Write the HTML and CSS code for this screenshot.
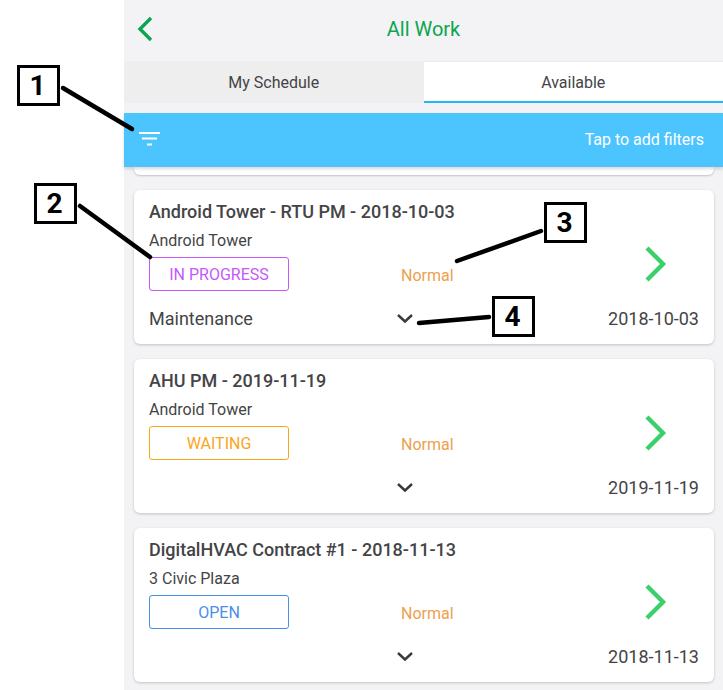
FILE: index.html
```html
<!DOCTYPE html>
<html lang="en">

<head>
    <meta charset="UTF-8">
    <title>All Work</title>
    <link rel="stylesheet" href="styles.css">
</head>

<body>
    <div class="page">
        <div class="side"></div>

        <div class="app">
            <div class="header">
                <svg class="back" width="18" height="26" viewBox="0 0 18 26">
                    <path d="M15 2 L4 13 L15 24" fill="none" stroke="#0ba550" stroke-width="3.4" />
                </svg>
                <span class="header_title">All Work</span>
            </div>

            <div class="tabs">
                <div class="tab">My Schedule</div>
                <div class="tab on">Available</div>
            </div>

            <div class="filter">
                <svg width="21" height="14" viewBox="0 0 21 14">
                    <path d="M0 1 H21 M3 6.5 H18 M8 12.5 H13" fill="none" stroke="#fff" stroke-width="2" />
                </svg>
                <span>Tap to add filters</span>
            </div>

            <div class="list">
                <div class="card_end"></div>

                <div class="card">
                    <div class="card_main">
                        <div class="card_title">Android Tower - RTU PM - 2018-10-03</div>
                        <div class="card_site">Android Tower</div>
                        <div class="card_status">
                            <span class="badge progress">IN PROGRESS</span>
                            <span class="priority">Normal</span>
                        </div>
                    </div>
                    <svg class="go" width="24" height="36" viewBox="0 0 24 36">
                        <path d="M4 2 L20 18 L4 34" fill="none" stroke="#3ad06b" stroke-width="4.4" />
                    </svg>
                    <div class="card_bottom">
                        <span class="card_type">Maintenance</span>
                        <svg class="more" width="18" height="11" viewBox="0 0 18 11">
                            <path d="M2 2 L9 8.5 L16 2" fill="none" stroke="#3a3a3c" stroke-width="2.4" />
                        </svg>
                        <span class="card_date">2018-10-03</span>
                    </div>
                </div>

                <div class="card">
                    <div class="card_main">
                        <div class="card_title">AHU PM - 2019-11-19</div>
                        <div class="card_site">Android Tower</div>
                        <div class="card_status">
                            <span class="badge waiting">WAITING</span>
                            <span class="priority">Normal</span>
                        </div>
                    </div>
                    <svg class="go" width="24" height="36" viewBox="0 0 24 36">
                        <path d="M4 2 L20 18 L4 34" fill="none" stroke="#3ad06b" stroke-width="4.4" />
                    </svg>
                    <div class="card_bottom">
                        <span class="card_type"></span>
                        <svg class="more" width="18" height="11" viewBox="0 0 18 11">
                            <path d="M2 2 L9 8.5 L16 2" fill="none" stroke="#3a3a3c" stroke-width="2.4" />
                        </svg>
                        <span class="card_date">2019-11-19</span>
                    </div>
                </div>

                <div class="card">
                    <div class="card_main">
                        <div class="card_title">DigitalHVAC Contract #1 - 2018-11-13</div>
                        <div class="card_site">3 Civic Plaza</div>
                        <div class="card_status">
                            <span class="badge open">OPEN</span>
                            <span class="priority">Normal</span>
                        </div>
                    </div>
                    <svg class="go" width="24" height="36" viewBox="0 0 24 36">
                        <path d="M4 2 L20 18 L4 34" fill="none" stroke="#3ad06b" stroke-width="4.4" />
                    </svg>
                    <div class="card_bottom">
                        <span class="card_type"></span>
                        <svg class="more" width="18" height="11" viewBox="0 0 18 11">
                            <path d="M2 2 L9 8.5 L16 2" fill="none" stroke="#3a3a3c" stroke-width="2.4" />
                        </svg>
                        <span class="card_date">2018-11-13</span>
                    </div>
                </div>
            </div>
        </div>

        <!-- callouts on top of the screenshot -->
        <svg class="lines" width="723" height="690" viewBox="0 0 723 690">
            <path d="M63 88 L132 129" />
            <path d="M80 206 L150 257" />
            <path d="M457 261 L541 231" />
            <path d="M419 323 L489 317" />
        </svg>
        <div class="num num1">1</div>
        <div class="num num2">2</div>
        <div class="num num3">3</div>
        <div class="num num4">4</div>
    </div>
</body>

</html>
```

FILE: styles.css
```css
* {
    margin: 0;
    padding: 0;
    box-sizing: border-box;
}

body {
    font-family: Roboto, "Liberation Sans", sans-serif;
    color: #444446;
    background-color: #fff;
}

.page {
    position: relative;
    display: flex;
    width: 723px;
    height: 690px;
    overflow: hidden;
}

.side {
    width: 124px;
    flex-shrink: 0;
}

.app {
    flex: 1;
    background-color: #f3f3f5;
}

.header {
    position: relative;
    display: flex;
    align-items: center;
    justify-content: center;
    height: 58px;
    margin-bottom: 3px;
}

.back {
    position: absolute;
    left: 12px;
    top: 16px;
}

.header_title {
    font-size: 20px;
    color: #0ba550;
}

.tabs {
    display: flex;
    height: 42px;
    background-color: #eee;
}

.tab {
    flex: 1;
    display: flex;
    align-items: center;
    justify-content: center;
    font-size: 16px;
}

.tab.on {
    margin-top: 1px;
    padding-top: 1px;
    background-color: #fff;
    border-bottom: 2px solid #1cb5ff;
}

.filter {
    display: flex;
    align-items: center;
    justify-content: space-between;
    height: 54px;
    margin-top: 10px;
    padding: 0 19px 0 15px;
    background-color: #4cc5ff;
    color: #fff;
    font-size: 16px;
    line-height: 18px;
    box-shadow: 0 2px 3px rgba(0, 0, 0, 0.15);
    position: relative;
}

.filter svg {
    margin-bottom: 2px;
}

.list {
    display: flex;
    flex-direction: column;
    gap: 15px;
    padding: 0 9px 0 10px;
}

.card_end {
    height: 8px;
    margin-bottom: 0;
    background-color: #fff;
    border-radius: 0 0 6px 6px;
    box-shadow: 0 1px 2px rgba(0, 0, 0, 0.2);
}

.card {
    position: relative;
    height: 154px;
    padding: 12px 15px 0;
    background-color: #fff;
    border-radius: 6px;
    box-shadow: 0 1px 3px rgba(0, 0, 0, 0.2);
}

.card_title {
    font-size: 18px;
    font-weight: 500;
    line-height: 20px;
}

.card_site {
    margin-top: 9px;
    font-size: 16px;
    line-height: 20px;
}

.card_status {
    display: flex;
    margin-top: 6px;
}

.badge {
    display: block;
    width: 140px;
    height: 34px;
    padding-top: 1px;
    line-height: 32px;
    text-align: center;
    font-size: 16px;
    border: 1px solid;
    border-radius: 3px;
}

.badge.progress {
    color: #c757fb;
}

.badge.waiting {
    color: #f9a51a;
}

.badge.open {
    color: #4a8fe7;
}

.priority {
    margin: 9px 0 0 112px;
    font-size: 16px;
    color: #eda04f;
}

.go {
    position: absolute;
    right: 47px;
    top: 56px;
}

.card_bottom {
    display: flex;
    align-items: center;
    justify-content: space-between;
    position: relative;
    height: 22px;
    margin-top: 16px;
}

.card_type,
.card_date {
    font-size: 18px;
}

.more {
    position: absolute;
    left: 247px;
    top: 6px;
}

.lines {
    position: absolute;
    left: 0;
    top: 0;
}

.lines path {
    stroke: #000;
    stroke-width: 4.5;
    stroke-linecap: round;
    fill: none;
}

.num {
    position: absolute;
    width: 43px;
    height: 41px;
    padding-right: 2px;
    border: 3px solid #000;
    background-color: #fff;
    color: #000;
    font-family: Roboto, sans-serif;
    font-size: 28px;
    font-weight: 700;
    line-height: 35px;
    text-align: center;
}

.num1 {
    left: 17px;
    top: 65px;
}

.num2 {
    left: 34px;
    top: 183px;
}

.num3 {
    left: 544px;
    top: 202px;
}

.num4 {
    left: 492px;
    top: 296px;
}
```
